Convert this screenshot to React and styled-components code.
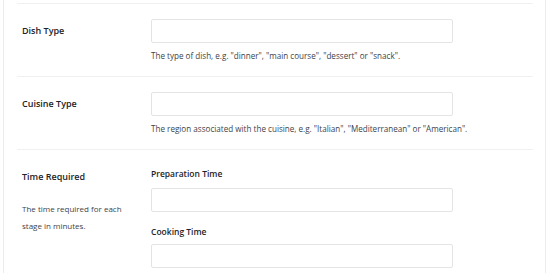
import React from "react";
import styled, { createGlobalStyle } from "styled-components";

const Global = createGlobalStyle`
  html, body { margin: 0; padding: 0; background: #fff; }
  body { font-family: "Open Sans", "Noto Sans", sans-serif; color: #1d2327; }
  * { box-sizing: border-box; }
`;

const Page = styled.div`
  padding-left: 3px;
  width: 546px;
`;

const Panel = styled.div`
  border-left: 1px solid #ececec;
  border-right: 1px solid #ececec;
  padding: 0 12px 0 13px;
  height: 273px;
  overflow: hidden;
`;

const Row = styled.div`
  display: grid;
  grid-template-columns: 129px 302px;
  border-top: 1px solid #f0f0f0;
  padding: 15px 0 12px 5px;
  &:first-child { margin-top: 3px; }
`;

const LabelCol = styled.div`
  display: flex;
  flex-direction: column;
`;

const Label = styled.div`
  font-size: 9px;
  font-weight: 600;
  line-height: 24px;
  color: #1d2327;
`;

const SideNote = styled.div`
  margin-top: 12px;
  font-size: 8px;
  line-height: 16.5px;
  color: #3c434a;
`;

const FieldCol = styled.div`
  display: flex;
  flex-direction: column;
`;

const SubLabel = styled.div`
  font-size: 8.5px;
  font-weight: 600;
  line-height: 16px;
  color: #1d2327;
  margin: ${(p) => (p.$first ? "1px 0 6px" : "12px 0 4px")};
`;

const Input = styled.div`
  height: 24px;
  border: 1px solid #e4e4e4;
  border-radius: 2px;
  background: #fff;
`;

const Help = styled.div`
  margin-top: 5px;
  font-size: 8.1px;
  line-height: 16px;
  color: #3c434a;
  white-space: nowrap;
`;

export default function App() {
  return (
    <>
      <Global />
      <Page>
        <Panel>
          <Row>
            <LabelCol>
              <Label>Dish Type</Label>
            </LabelCol>
            <FieldCol>
              <Input />
              <Help>The type of dish, e.g. "dinner", "main course", "dessert" or "snack".</Help>
            </FieldCol>
          </Row>
          <Row>
            <LabelCol>
              <Label>Cuisine Type</Label>
            </LabelCol>
            <FieldCol>
              <Input />
              <Help>The region associated with the cuisine, e.g. "Italian", "Mediterranean" or "American".</Help>
            </FieldCol>
          </Row>
          <Row>
            <LabelCol>
              <Label>Time Required</Label>
              <SideNote>
                The time required for each
                <br />
                stage in minutes.
              </SideNote>
            </LabelCol>
            <FieldCol>
              <SubLabel $first>Preparation Time</SubLabel>
              <Input />
              <SubLabel>Cooking Time</SubLabel>
              <Input />
            </FieldCol>
          </Row>
        </Panel>
      </Page>
    </>
  );
}
